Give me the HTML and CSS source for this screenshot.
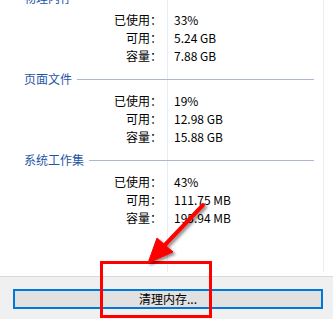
FILE: index.html
```html
<!DOCTYPE html>
<html lang="zh-CN">
<head>
  <meta charset="UTF-8" />
  <meta name="viewport" content="width=device-width, initial-scale=1.0" />
  <title>内存</title>
  <link rel="stylesheet" href="styles.css">
</head>
<body>
  <div class="panel">
    <div class="sections">
      <div class="section">
        <div class="section-title"><span>物理内存</span></div>
        <div class="rows">
          <div class="label">已使用：</div><div class="value">33%</div>
          <div class="label">可用：</div><div class="value">5.24 GB</div>
          <div class="label">容量：</div><div class="value">7.88 GB</div>
        </div>
      </div>

      <div class="section">
        <div class="section-title"><span>页面文件</span></div>
        <div class="rows">
          <div class="label">已使用：</div><div class="value">19%</div>
          <div class="label">可用：</div><div class="value">12.98 GB</div>
          <div class="label">容量：</div><div class="value">15.88 GB</div>
        </div>
      </div>

      <div class="section">
        <div class="section-title"><span>系统工作集</span></div>
        <div class="rows">
          <div class="label">已使用：</div><div class="value">43%</div>
          <div class="label">可用：</div><div class="value">111.75 MB</div>
          <div class="label">容量：</div><div class="value">195.94 MB</div>
        </div>
      </div>
    </div>
  </div>

  <div class="footer">
    <button class="clean-button">清理内存...</button>
  </div>

  <!-- Red annotation drawn over the screenshot -->
  <div class="mark-box"></div>
  <svg class="mark-arrow" width="333" height="319" viewBox="0 0 333 319">
    <defs>
      <filter id="shadow" x="-50%" y="-50%" width="200%" height="200%">
        <feDropShadow dx="2" dy="2" stdDeviation="1.5" flood-color="#000" flood-opacity="0.45" />
      </filter>
    </defs>
    <g filter="url(#shadow)" fill="#ff0000" stroke="#ff0000">
      <line x1="203" y1="205" x2="163" y2="247" stroke-width="4" stroke-linecap="round" />
      <polygon points="148,263 157,238 173,252" stroke-width="1" stroke-linejoin="round" />
    </g>
  </svg>
</body>
</html>
```

FILE: styles.css
```css
*, *::before, *::after {
  box-sizing: border-box;
}

html, body {
  margin: 0;
  padding: 0;
  height: 100vh;
  overflow: hidden;
}

body {
  position: relative;
  display: flex;
  flex-direction: column;
  background: #ffffff;
  color: #000000;
  font-family: "Noto Sans CJK SC", "Noto Sans", sans-serif;
  font-size: 12px;
}

/* White area with the two faint column lines */
.panel {
  height: 277px;
  flex-shrink: 0;
  border-bottom: 1px solid #dadada;
  overflow: hidden;
  background:
    linear-gradient(to right, transparent 167px, #e6edf6 167px, #e6edf6 168px, transparent 168px),
    linear-gradient(to right, transparent 323px, #e6edf6 323px, #e6edf6 324px, transparent 324px);
  background-size: 100% 272px;
  background-repeat: no-repeat;
}

.sections {
  margin-top: -10px;
}

.section {
  margin-bottom: 6px;
}

.section-title {
  display: flex;
  align-items: center;
  gap: 5px;
  height: 16px;
  padding: 0 19px 0 24px;
  color: #1e55a5;
  line-height: 16px;
}

.section-title::after {
  content: "";
  flex: 1;
  height: 1px;
  background: #adb6d2;
}

.rows {
  display: grid;
  grid-template-columns: 162px 1fr;
  column-gap: 12px;
  margin-top: 5px;
  line-height: 18px;
}

.label {
  text-align: right;
}

.footer {
  flex: 1;
  background: #f0f0f0;
  padding: 12px 10px 0 13px;
}

.clean-button {
  display: block;
  width: 310px;
  height: 20px;
  padding: 0;
  border: 2px solid #0078d7;
  background: #e1e1e1;
  color: #000000;
  font-family: inherit;
  font-size: 12px;
  line-height: 16px;
}

.mark-box {
  position: absolute;
  left: 100px;
  top: 261px;
  width: 112px;
  height: 57px;
  border: 3px solid #ff0000;
}

.mark-arrow {
  position: absolute;
  left: 0;
  top: 0;
  pointer-events: none;
}
```
